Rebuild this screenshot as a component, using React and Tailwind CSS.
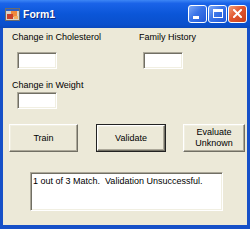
import React from "react";

function TitleIcon() {
  return (
    <svg width="15" height="13" viewBox="0 0 15 13">
      <rect x="0.5" y="0.5" width="14" height="12" fill="#d8d4c8" stroke="#6b6b6b" />
      <rect x="1" y="1" width="13" height="2" fill="#2f5fc0" />
      <rect x="6" y="3" width="6" height="6" fill="#f08a3c" />
      <rect x="2" y="6" width="6" height="5" fill="#c8402a" />
      <rect x="9" y="8" width="4" height="3" fill="#f4b060" />
    </svg>
  );
}

function CapButton({ kind }) {
  if (kind === "close") {
    return (
      <div className="w-[19px] h-[18px] rounded-[3px] border border-white bg-[linear-gradient(135deg,#f2a07a_0%,#e2562e_45%,#c8401c_100%)] flex items-center justify-center">
        <svg width="9" height="9" viewBox="0 0 9 9">
          <path d="M1 1 L8 8 M8 1 L1 8" stroke="white" strokeWidth="2" strokeLinecap="square" />
        </svg>
      </div>
    );
  }
  return (
    <div className="w-[19px] h-[18px] rounded-[3px] border border-white bg-[linear-gradient(135deg,#7fa8f5_0%,#3a74e8_45%,#2258d8_100%)] flex items-center justify-center">
      {kind === "min" ? (
        <div className="w-[6px] h-[3px] bg-white mt-[7px] mr-[3px]" />
      ) : (
        <div className="w-[10px] h-[9px] border border-white border-t-[3px]" />
      )}
    </div>
  );
}

function TextBox({ className = "" }) {
  return (
    <div
      className={
        "bg-white border border-t-[#aca899] border-l-[#aca899] border-b-white border-r-white shadow-[inset_1px_1px_0_#716f64,inset_-1px_-1px_0_#f1efe2] " +
        className
      }
    />
  );
}

function Btn({ children, def = false, className = "" }) {
  const inner = (
    <div className="w-full h-full bg-[#ece9d8] border border-t-white border-l-white border-b-[#716f64] border-r-[#716f64] shadow-[inset_-1px_-1px_0_#aca899,inset_1px_1px_0_#f1efe2] flex items-center justify-center text-center leading-[11px] text-black">
      {children}
    </div>
  );
  return (
    <div className={(def ? "border border-[#222] " : "") + className}>{inner}</div>
  );
}

export default function App() {
  return (
    <div
      className="w-[250px] h-[229px] bg-[#1650c8] flex flex-col overflow-hidden"
      style={{ fontFamily: '"Liberation Sans", Arial, sans-serif' }}
    >
      <div className="h-[28px] shrink-0 bg-[linear-gradient(to_bottom,#3d86f5_0%,#1a63e8_12%,#0b56d8_50%,#0a4fcc_88%,#0a48bc_100%)] flex items-center pl-[5px] pr-[3px]">
        <TitleIcon />
        <span className="ml-[3px] text-white font-bold text-[10.5px] leading-none [text-shadow:1px_1px_0_#0a2a80]">
          Form1
        </span>
        <div className="ml-auto flex gap-[1px] mb-[1px]">
          <CapButton kind="min" />
          <CapButton kind="max" />
          <CapButton kind="close" />
        </div>
      </div>
      <div className="flex-1 ml-[3px] mr-[3px] mb-[4px] bg-[#ece9d8] text-[9px] leading-[11px] text-black flex flex-col">
        <div className="flex mt-[4px]">
          <div className="w-[136px] pl-[9px] flex flex-col">
            <span>Change in Cholesterol</span>
            <TextBox className="ml-[5px] mt-[9px] w-[40px] h-[17px]" />
            <span className="mt-[11px]">Change in Weight</span>
            <TextBox className="ml-[5px] mt-[1px] w-[40px] h-[17px]" />
          </div>
          <div className="flex flex-col">
            <span>Family History</span>
            <TextBox className="ml-[4px] mt-[9px] w-[40px] h-[17px]" />
          </div>
        </div>
        <div className="flex mt-[15px] pl-[6px]">
          <Btn className="w-[69px] h-[28px]">Train</Btn>
          <Btn def className="ml-[18px] w-[70px] h-[28px]">Validate</Btn>
          <Btn className="ml-[17px] w-[62px] h-[28px]">
            <span>
              Evaluate
              <br />
              Unknown
            </span>
          </Btn>
        </div>
        <div className="mt-[20px] ml-[27px] w-[193px] h-[39px] bg-white border border-t-[#aca899] border-l-[#aca899] border-b-white border-r-white shadow-[inset_1px_1px_0_#716f64,inset_-1px_-1px_0_#f1efe2] pl-[2px] pt-[3px] whitespace-pre">
          {"1 out of 3 Match.  Validation Unsuccessful."}
        </div>
      </div>
    </div>
  );
}
